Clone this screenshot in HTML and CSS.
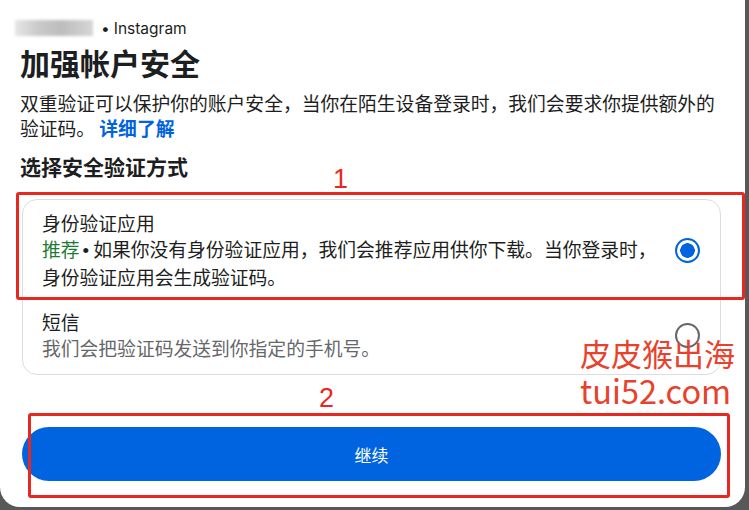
FILE: index.html
```html
<!DOCTYPE html>
<html lang="zh-CN">
<head>
    <meta charset="UTF-8">
    <title>加强帐户安全</title>
    <link rel="stylesheet" href="styles.css">
</head>
<body>
<div class="panel">
    <div class="meta"><span class="blur"></span><span class="dot">•</span> Instagram</div>
    <h1 class="title">加强帐户安全</h1>
    <p class="desc">双重验证可以保护你的账户安全，当你在陌生设备登录时，我们会要求你提供额外的验证码。 <a class="link" href="#">详细了解</a></p>
    <h2 class="sub">选择安全验证方式</h2>
    <div class="mark mark-1">1</div>
    <div class="options">
        <div class="opt">
            <div class="opt-text">
                <div class="opt-name">身份验证应用</div>
                <div class="opt-desc"><span class="green">推荐</span><span class="bullet">•</span>如果你没有身份验证应用，我们会推荐应用供你下载。当你登录时，身份验证应用会生成验证码。</div>
            </div>
            <span class="radio on"></span>
        </div>
        <div class="opt">
            <div class="opt-text">
                <div class="opt-name">短信</div>
                <div class="opt-desc gray">我们会把验证码发送到你指定的手机号。</div>
            </div>
            <span class="radio"></span>
        </div>
        <div class="redbox box-1"></div>
    </div>
    <div class="mark mark-2">2</div>
    <div class="btn-wrap">
        <button class="btn">继续</button>
        <div class="redbox box-2"></div>
    </div>
    <div class="water">皮皮猴出海<br><span class="site">tui52.com</span></div>
</div>
</body>
</html>
```
FILE: styles.css
```css
*{
    margin: 0;
    padding: 0;
    box-sizing: border-box;
}
body{
    background: #585858;
    width: 749px;
    height: 510px;
    overflow: hidden;
    font-family: "Noto Sans CJK SC", "Noto Sans", sans-serif;
    color: #1c1e21;
}
.panel{
    position: relative;
    width: 745px;
    height: 507px;
    background: #fff;
    border-radius: 0 0 20px 20px;
    padding: 14px 28px 0 20px;
}
.meta{
    display: flex;
    align-items: center;
    font-family: "Inter", "Noto Sans", sans-serif;
    font-size: 15.5px;
    color: #1c1e21;
    height: 28px;
}
.blur{
    display: inline-block;
    width: 78px;
    height: 16px;
    margin-left: -5px;
    background: linear-gradient(90deg, #e6e6e6, #c9c9c9 30%, #bdbdbd 60%, #d6d6d6);
    filter: blur(1.5px);
}
.dot{
    margin: 0 4px 0 8px;
}
.title{
    font-size: 30px;
    font-weight: 700;
    line-height: 40px;
}
.desc{
    font-size: 18.8px;
    line-height: 25px;
    margin-top: 8px;
}
.link{
    color: #0064e0;
    font-weight: 700;
    text-decoration: none;
}
.sub{
    font-size: 21px;
    font-weight: 700;
    line-height: 30px;
    margin-top: 11px;
}
.mark{
    position: absolute;
    color: #e8281e;
    font-family: "Liberation Sans", sans-serif;
    font-size: 27px;
    line-height: 1;
}
.mark-1{
    left: 333px;
    top: 166px;
}
.mark-2{
    left: 319px;
    top: 385px;
}
.options{
    position: relative;
    margin-top: 18px;
    margin-left: 2px;
    width: 699px;
    border: 1px solid #dadde1;
    border-radius: 15px;
}
.opt{
    display: flex;
    align-items: center;
    padding: 10px 20px 10px 19px;
}
.opt + .opt{
    padding-top: 9px;
    padding-bottom: 13px;
}
.opt-text{
    flex: 1;
    padding-right: 14px;
}
.opt-name{
    font-size: 18.8px;
    line-height: 26px;
}
.opt-desc{
    font-size: 18.8px;
    line-height: 26px;
}
.bullet{
    font-family: "Liberation Sans", sans-serif;
    margin: 0 4px 0 3px;
}
.green{
    color: #1f7a34;
}
.gray{
    color: #65676b;
}
.radio{
    width: 25px;
    height: 25px;
    border-radius: 50%;
    border: 2px solid #65676b;
    flex-shrink: 0;
}
.radio.on{
    border: 2.5px solid #0064e0;
    background: radial-gradient(circle, #0064e0 0 7px, #fff 7.5px);
}
.redbox{
    position: absolute;
    border: 3px solid #e8281e;
    border-radius: 3px;
}
.box-1{
    left: -7px;
    top: -8px;
    width: 729px;
    height: 108px;
}
.btn-wrap{
    position: relative;
    margin-top: 52px;
    margin-left: 2px;
}
.btn{
    display: block;
    width: 699px;
    height: 54px;
    border: none;
    border-radius: 27px;
    background: #0064e0;
    color: #fff;
    font-family: "Noto Sans CJK SC", sans-serif;
    font-size: 17px;
}
.box-2{
    left: 6px;
    top: -14px;
    width: 702px;
    height: 85px;
}
.water{
    position: absolute;
    left: 580px;
    top: 334px;
    color: #e8412c;
    font-family: "Noto Sans CJK SC", sans-serif;
    font-size: 31px;
    line-height: 37px;
}
.water .site{
    font-size: 32.5px;
}
```
